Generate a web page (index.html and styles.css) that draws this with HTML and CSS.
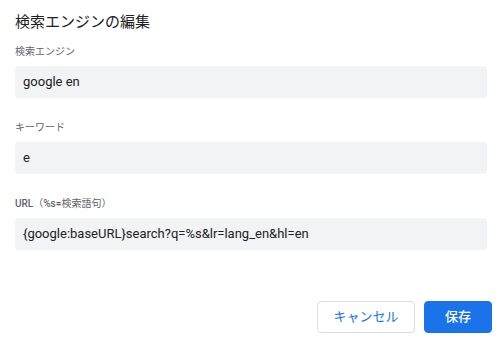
FILE: index.html
```html
<!DOCTYPE html>
<html lang="ja">
<head>
<meta charset="utf-8">
<link rel="stylesheet" href="styles.css">
</head>
<body>
<div class="dialog">
  <h1 class="title">検索エンジンの編集</h1>
  <div class="fields">
    <div class="field">
      <label class="label">検索エンジン</label>
      <div class="input">google en</div>
    </div>
    <div class="field">
      <label class="label">キーワード</label>
      <div class="input">e</div>
    </div>
    <div class="field">
      <label class="label"><span class="latin">URL</span>（<span class="latin">%s=</span>検索語句）</label>
      <div class="input">{google:baseURL}search?q=%s&amp;lr=lang_en&amp;hl=en</div>
    </div>
  </div>
  <div class="actions">
    <button class="btn cancel">キャンセル</button>
    <button class="btn save">保存</button>
  </div>
</div>
</body>
</html>
```

FILE: styles.css
```css
html, body {
  margin: 0;
  padding: 0;
  background: #ffffff;
}
body {
  font-family: Roboto, "Noto Sans CJK JP", sans-serif;
  color: #202124;
}
.dialog {
  width: 502px;
  height: 347px;
  box-sizing: border-box;
  padding: 12px 0 0 15px;
  display: flex;
  flex-direction: column;
}
.title {
  margin: 0;
  font-size: 15px;
  line-height: 20px;
  font-weight: 400;
  color: #202124;
}
.fields {
  margin-top: 13px;
  width: 472px;
  display: flex;
  flex-direction: column;
  gap: 23px;
}
.field {
  display: flex;
  flex-direction: column;
  gap: 7px;
}
.label {
  font-size: 10px;
  line-height: 14px;
  font-weight: 400;
  color: #5f6368;
}
.latin {
  font-weight: 500;
}
.input {
  height: 32px;
  box-sizing: border-box;
  background: #f1f3f4;
  border-radius: 4px;
  padding: 0 8px;
  font-size: 13px;
  line-height: 32px;
  color: #202124;
}
.actions {
  margin-top: 51px;
  margin-right: 10px;
  display: flex;
  justify-content: flex-end;
  gap: 9px;
}
.btn {
  height: 32px;
  box-sizing: border-box;
  border-radius: 4px;
  font-family: Roboto, "Noto Sans CJK JP", sans-serif;
  font-size: 13px;
  line-height: 30px;
  cursor: pointer;
}
.cancel {
  width: 98px;
  padding: 0;
  background: #ffffff;
  border: 1px solid #dadce0;
  color: #1a73e8;
  font-weight: 400;
}
.save {
  width: 68px;
  padding: 0;
  background: #1a73e8;
  border: 1px solid #1a73e8;
  color: #ffffff;
  font-weight: 500;
}
```
